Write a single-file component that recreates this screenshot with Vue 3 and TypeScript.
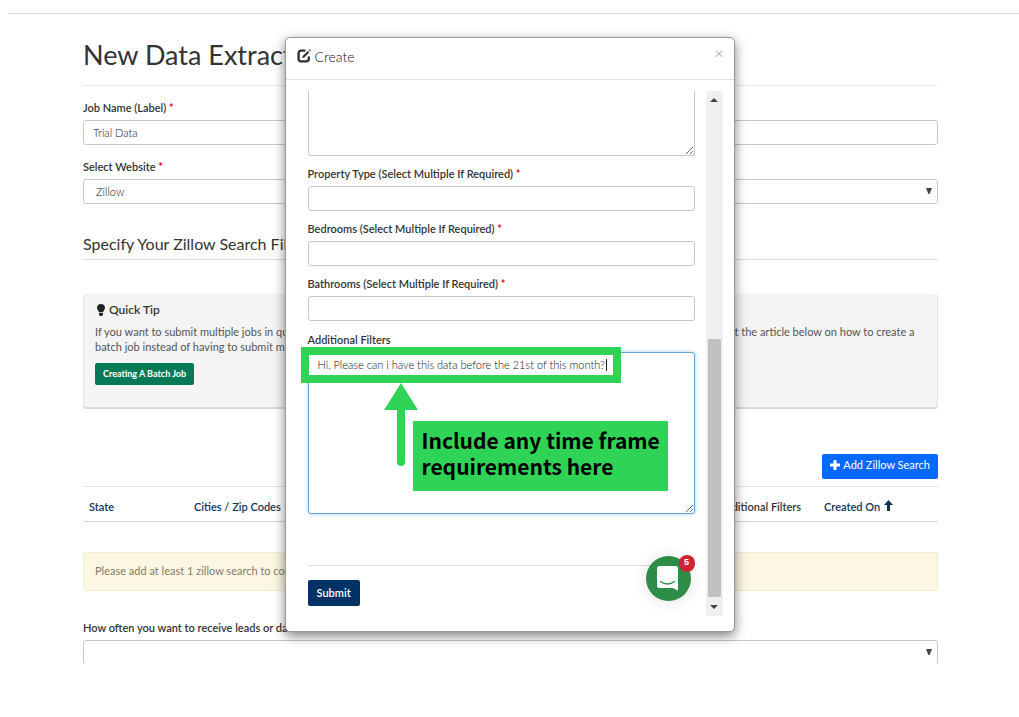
<script setup lang="ts">
import { ref } from 'vue'

interface SelectField {
  id: string
  label: string
}

const jobName = ref('Trial Data')
const website = ref('Zillow')
const frequency = ref('')
const notes = ref('Hi, Please can i have this data before the 21st of this month?')
const location = ref('')

const fields: SelectField[] = [
  { id: 'property-type', label: 'Property Type (Select Multiple If Required)' },
  { id: 'bedrooms', label: 'Bedrooms (Select Multiple If Required)' },
  { id: 'bathrooms', label: 'Bathrooms (Select Multiple If Required)' },
]
</script>

<template>
  <div class="page">
    <div class="topline"></div>
    <main class="content">
      <h1>New Data Extraction Job</h1>

      <label class="label" for="job">Job Name (Label) <b>*</b></label>
      <input id="job" v-model="jobName" class="control" type="text" />

      <label class="label next" for="site">Select Website <b>*</b></label>
      <div class="select">
        <select id="site" v-model="website" class="control">
          <option>Zillow</option>
        </select>
        <svg viewBox="0 0 6 6" aria-hidden="true"><path d="M0 0H6L3.6 6H2.4Z" /></svg>
      </div>

      <h2>Specify Your Zillow Search Filters</h2>

      <section class="tip">
        <h3>
          <svg viewBox="0 0 8 12" aria-hidden="true">
            <path d="M4 0C1.600 0 0 1.700 0 3.800C0 5.700 1.500 6.400 1.900 8H6.100C6.500 6.400 8 5.700 8 3.800C8 1.700 6.400 0 4 0ZM2 8.800H6V10.400L5 12H3L2 10.400Z" />
          </svg>
          Quick Tip
        </h3>
        <p>
          If you want to submit multiple jobs in quick succession with the same search filters and the same location options, so please check out the article below on how to create a batch job instead of having to submit multiple single jobs.
        </p>
        <button type="button" class="btn green">Creating A Batch Job</button>
      </section>

      <div class="actions">
        <button type="button" class="btn blue">
          <svg viewBox="0 0 10 10" aria-hidden="true"><path d="M3.500 0H6.500V3.500H10V6.500H6.500V10H3.500V6.500H0V3.500H3.500Z" /></svg>
          Add Zillow Search
        </button>
      </div>

      <table>
        <thead>
          <tr>
            <th class="c-state">State</th>
            <th class="c-city">Cities / Zip Codes</th>
            <th>Property Type</th>
            <th>Bedrooms</th>
            <th>Bathrooms</th>
            <th class="c-filters">Additional Filters</th>
            <th class="c-created">
              Created On
              <svg viewBox="0 0 9 11" aria-hidden="true"><path d="M4.500 0L9 5H6V11H3V5H0Z" /></svg>
            </th>
          </tr>
        </thead>
      </table>

      <div class="alert">Please add at least 1 zillow search to continue</div>

      <label class="label" for="freq">How often you want to receive leads or data?</label>
      <div class="select cut">
        <select id="freq" v-model="frequency" class="control">
          <option value=""></option>
        </select>
        <svg viewBox="0 0 6 6" aria-hidden="true"><path d="M0 0H6L3.6 6H2.4Z" /></svg>
      </div>
    </main>

    <div class="overlay">
      <div class="modal" role="dialog" aria-labelledby="modal-title">
        <header class="modal-head">
          <svg class="edit" viewBox="0 0 14 14" aria-hidden="true">
            <path d="M8.500 1.600H4A2.400 2.400 0 0 0 1.600 4V10A2.400 2.400 0 0 0 4 12.400H9.400A2.400 2.400 0 0 0 11.800 10V7.600" fill="none" stroke="#333" stroke-width="2.400" />
            <path d="M5.200 9.300L5.700 7L10.800 2L12.200 3.400L7.400 8.500ZM11.600 1.100L12.500 .2L14 1.700L13.100 2.600Z" fill="#333" />
          </svg>
          <h4 id="modal-title">Create</h4>
          <button type="button" class="close" aria-label="Close">×</button>
        </header>

        <div class="modal-body">
          <form class="form" @submit.prevent>
            <textarea v-model="location" class="control location" aria-label="Location"></textarea>
            <div v-for="f in fields" :key="f.id" class="group">
              <label class="label" :for="f.id">{{ f.label }} <b>*</b></label>
              <input :id="f.id" class="control" type="text" />
            </div>
            <div class="group last">
              <label class="label" for="notes">Additional Filters</label>
              <textarea id="notes" v-model="notes" class="control notes"></textarea>
            </div>
            <hr />
            <button type="submit" class="btn navy">Submit</button>
          </form>
          <div class="scrollbar" aria-hidden="true">
            <svg viewBox="0 0 8 4"><path d="M0 4L4 0L8 4Z" /></svg>
            <div class="track"><div class="thumb"></div></div>
            <svg viewBox="0 0 8 4"><path d="M0 0L4 4L8 0Z" /></svg>
          </div>
        </div>

        <div class="marker"><span class="caret"></span></div>
        <svg class="arrow" viewBox="0 0 34 83" aria-hidden="true">
          <path d="M17 0L34 27H21V79A4 4 0 0 1 13 79V27H0Z" fill="#2fd355" />
        </svg>
        <div class="callout">Include any time frame<br />requirements here</div>

        <button type="button" class="chat" aria-label="Open chat">
          <svg viewBox="0 0 22 25" aria-hidden="true">
            <path d="M2.500 0H18.500A2.500 2.500 0 0 1 21 2.500V24.500L15.500 22H2.500A2.500 2.500 0 0 1 0 19.500V2.500A2.500 2.500 0 0 1 2.500 0Z" fill="#fff" />
            <path d="M3.500 15.500Q10.500 20.500 17.500 15.500" fill="none" stroke="#2d8c46" stroke-width="1.500" stroke-linecap="round" />
          </svg>
          <span class="badge">5</span>
        </button>
      </div>
    </div>
  </div>
</template>

<style>
body {
  margin: 0;
  background: #fff;
}
</style>

<style scoped>
* {
  box-sizing: border-box;
}

.page {
  position: relative;
  min-height: 100vh;
  overflow: hidden;
  font-family: Lato, "Liberation Sans", sans-serif;
  font-size: 11px;
  color: #333;
}

.topline {
  height: 1px;
  margin: 13px 0 0 8px;
  background: #d9d9d9;
}

.content {
  padding: 0 81px 0 83px;
}

h1 {
  margin: 0 0 15px;
  padding: 23px 0 13px;
  border-bottom: 1px solid #e8e8e8;
  font-size: 27px;
  line-height: 35px;
  font-weight: 400;
  white-space: nowrap;
}

.label {
  display: block;
  margin-bottom: 6px;
  font-size: 11px;
  line-height: 13px;
  font-weight: 600;
  white-space: nowrap;
}

.label b {
  color: #e8112d;
}

.next {
  margin-top: 15px;
}

.control {
  display: block;
  width: 100%;
  height: 25px;
  margin: 0;
  padding: 0 9px 1px;
  border: 1px solid #c8c8c8;
  border-radius: 3px;
  background: #fff;
  color: #111;
  font-family: inherit;
  font-size: 11px;
  line-height: 15px;
  font-weight: 300;
  outline: none;
}

select.control {
  appearance: none;
  padding: 0 12px 1px;
}

.select {
  position: relative;
}

.select svg {
  position: absolute;
  right: 6px;
  top: 9px;
  width: 6px;
  height: 6px;
  fill: #444;
}

.cut {
  height: 24px;
  overflow: hidden;
}

h2 {
  margin: 30px 0 34px;
  padding-bottom: 5px;
  border-bottom: 1px solid #ddd;
  font-size: 16px;
  line-height: 20px;
  font-weight: 400;
}

.tip {
  height: 115px;
  padding: 7px 11px;
  border: 1px solid #e2e2e2;
  border-top-color: #f0f0f0;
  border-bottom: 2px solid #d9d9d9;
  border-radius: 3px;
  background: #f4f4f4;
}

h3 {
  display: flex;
  align-items: center;
  gap: 4px;
  margin: 0 0 7px 2px;
  font-size: 12px;
  line-height: 15px;
  font-weight: 600;
}

h3 svg {
  width: 8px;
  height: 12px;
  fill: #222;
}

.tip p {
  margin: 0 0 9px;
  color: #555;
  font-size: 11px;
  line-height: 15px;
}

.btn {
  display: inline-flex;
  align-items: center;
  justify-content: center;
  gap: 3px;
  border: 0;
  border-radius: 2px;
  color: #fff;
  font-family: inherit;
  font-size: 11px;
  line-height: 15px;
  white-space: nowrap;
}

.green {
  height: 22px;
  padding: 0 8px 2px;
  background: #067a57;
  font-size: 9px;
  font-weight: 700;
}

.blue {
  height: 25px;
  padding: 0 8px 4px;
  background: #0568ff;
}

.blue svg {
  width: 10px;
  height: 10px;
  fill: #fff;
}

.navy {
  height: 26px;
  padding: 0 9px 2px;
  background: #003263;
  font-weight: 600;
}

.actions {
  display: flex;
  justify-content: flex-end;
  margin: 45px 0 7px;
}

table {
  width: 100%;
  margin-bottom: 30px;
  border-collapse: collapse;
  table-layout: fixed;
  border-top: 1px solid #e4e4e4;
  border-bottom: 1px solid #d5d5d5;
}

th {
  height: 35px;
  padding: 5px 6px 0;
  color: #0e3556;
  font-size: 11px;
  font-weight: 600;
  text-align: left;
  white-space: nowrap;
}

th svg {
  width: 9px;
  height: 11px;
  margin-left: 1px;
  fill: #0b3558;
}

.c-state {
  width: 105px;
}

.c-filters {
  width: 106px;
  color: #333;
}

.c-city,
.c-created {
  width: 120px;
}

.alert {
  margin-bottom: 30px;
  padding: 10px 11px 12px;
  border: 1px solid #f5ecd0;
  border-radius: 3px;
  background: #fcf7e3;
  color: #857a66;
  line-height: 15px;
}

.overlay {
  position: absolute;
  inset: 0;
  display: flex;
  justify-content: center;
  align-items: flex-start;
  padding-top: 37px;
}

.modal {
  position: relative;
  width: 450px;
  border: 1px solid #999;
  border-radius: 5px;
  background: #fff;
  box-shadow: 0 4px 12px rgba(0, 0, 0, 0.5);
}

.modal-head {
  display: flex;
  align-items: center;
  gap: 4px;
  height: 42px;
  padding: 0 10px 4px 11px;
  border-bottom: 1px solid #e2e2e2;
}

.edit {
  width: 14px;
  height: 14px;
  margin-bottom: 2px;
}

h4 {
  flex: 1;
  margin: 0;
  color: #111;
  font-size: 14px;
  line-height: 18px;
  font-weight: 300;
}

.close {
  padding: 0;
  margin-bottom: 8px;
  border: 0;
  background: none;
  color: #bbb;
  font-family: inherit;
  font-size: 16px;
  line-height: 16px;
}

.modal-body {
  display: flex;
  gap: 11px;
  padding: 11px 11px 15px 22px;
}

.form {
  flex: 1;
  min-width: 0;
}

textarea.control {
  resize: vertical;
}

.location {
  height: 65px;
  border-top: 0;
  border-radius: 0 0 3px 3px;
}

.group {
  margin-top: 11px;
}

.group.last {
  margin-top: 12px;
}

.notes.control {
  height: 162px;
  padding: 4px 9px;
  border-color: #66a5d8;
  box-shadow: 0 0 4px rgba(102, 175, 233, 0.6);
}

hr {
  margin: 51px 0 14px;
  border: 0;
  border-top: 1px solid #ddd;
}

.scrollbar {
  display: flex;
  flex-direction: column;
  align-items: center;
  gap: 8px;
  width: 17px;
  height: 525px;
  padding: 7px 0;
  background: #f0f0f0;
}

.scrollbar svg {
  width: 8px;
  height: 4px;
  fill: #444;
}

.track {
  display: flex;
  flex: 1;
  flex-direction: column;
  justify-content: flex-end;
}

.thumb {
  width: 13px;
  height: 53%;
  background: #c1c1c1;
}

.marker {
  position: absolute;
  left: 15px;
  top: 309px;
  width: 320px;
  height: 36px;
  border: 8px solid #2fd355;
}

.caret {
  position: absolute;
  right: 6px;
  top: 4px;
  width: 1px;
  height: 12px;
  background: #222;
}

.arrow {
  position: absolute;
  left: 98px;
  top: 345px;
  width: 34px;
  height: 83px;
}

.callout {
  position: absolute;
  left: 127px;
  top: 383px;
  padding: 6px 8px 12px 9px;
  border-radius: 1px;
  background: #2fd355;
  color: #000;
  font-family: "Noto Sans CJK SC", sans-serif;
  font-size: 21px;
  line-height: 26px;
  font-weight: 700;
  white-space: nowrap;
}

.chat {
  position: absolute;
  left: 360px;
  top: 518px;
  display: flex;
  align-items: center;
  justify-content: center;
  width: 45px;
  height: 45px;
  padding: 0;
  border: 0;
  border-radius: 50%;
  background: #2d8c46;
  box-shadow: 0 1px 16px rgba(0, 0, 0, 0.12);
}

.chat svg {
  width: 22px;
  height: 25px;
}

.badge {
  position: absolute;
  right: -4px;
  top: -1px;
  width: 16px;
  height: 17px;
  border-radius: 8px;
  background: #cf2430;
  color: #fff;
  font-family: "Liberation Sans", sans-serif;
  font-size: 9px;
  line-height: 15px;
  font-weight: 700;
  text-align: center;
}
</style>
